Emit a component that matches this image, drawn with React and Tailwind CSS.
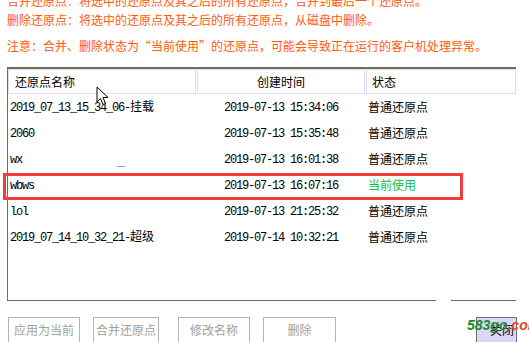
import React from "react";

const rows = [
  { name: "2019_07_13_15_34_06-", cjk: "挂载", time: "2019-07-13 15:34:06", state: "普通还原点" },
  { name: "2060", cjk: "", time: "2019-07-13 15:35:48", state: "普通还原点" },
  { name: "wx", cjk: "", time: "2019-07-13 16:01:38", state: "普通还原点" },
  { name: "wbws", cjk: "", time: "2019-07-13 16:07:16", state: "当前使用", current: true },
  { name: "lol", cjk: "", time: "2019-07-13 21:25:32", state: "普通还原点" },
  { name: "2019_07_14_10_32_21-", cjk: "超级", time: "2019-07-14 10:32:21", state: "普通还原点" },
];

const mono = "font-['Liberation_Mono',monospace] tracking-[-1.2px]";

function Btn({ children, className = "" }) {
  return (
    <div className={"h-[26px] border border-[#b4b4ac] text-[#a0a0a0] flex items-start justify-center pt-[3px] text-[12px] " + className}>
      {children}
    </div>
  );
}

export default function App() {
  return (
    <div className="relative w-[529px] h-[342px] overflow-hidden bg-white text-[12px] font-['Noto_Sans_CJK_SC',sans-serif]">
      {/* notes */}
      <div className="pl-[7px] text-[#ff5a0a] leading-[19px] -mt-[9px]">
        <div>合并还原点：将选中的还原点及其之后的所有还原点，合并到最后一个还原点。</div>
        <div>删除还原点：将选中的还原点及其之后的所有还原点，从磁盘中删除。</div>
        <div className="mt-[7px]">注意：合并、删除状态为“当前使用”的还原点，可能会导致正在运行的客户机处理异常。</div>
      </div>

      {/* list */}
      <div className="ml-[7px] mt-[12px] w-[509px] h-[234px] border-l border-t-2 border-b border-[#6e6e5c] relative">
        <div className="flex h-[25px] text-black">
          <div className="w-[188px] border border-[#dcdcf4] pl-[6px] flex items-center">还原点名称</div>
          <div className="w-[168px] ml-[1px] border border-[#dcdcf4] flex items-center justify-center">创建时间</div>
          <div className="flex-1 ml-[1px] border border-[#dcdcf4] pl-[5px] flex items-center">状态</div>
        </div>
        {rows.map((r) => (
          <div key={r.time} className="flex h-[26px] items-center text-black">
            <div className="w-[189px] pl-[2px]">
              <span className={mono}>{r.name}</span>
              {r.cjk}
            </div>
            <div className="w-[168px] pl-[27px]">
              <span className={mono}>{r.time}</span>
            </div>
            <div className={"flex-1 pl-[3px] " + (r.current ? "text-[#10c040]" : "")}>{r.state}</div>
          </div>
        ))}
        <div className="absolute left-[428px] -bottom-[1px] w-[15px] h-[1px] bg-white" />
      </div>

      {/* buttons */}
      <div className="flex mt-[16px] ml-[8px]">
        <Btn className="w-[72px]">应用为当前</Btn>
        <Btn className="w-[66px] ml-[13px]">合并还原点</Btn>
        <Btn className="w-[72px] ml-[19px]">修改名称</Btn>
        <Btn className="w-[73px] ml-[13px]">删除</Btn>
        <div className="w-[41px] ml-[140px] h-[26px] border border-[#707070] bg-[#d8d8f8] text-black pt-[3px] pl-[13px]">关闭</div>
      </div>

      {/* selection highlight */}
      <div className="absolute left-[3px] top-[173px] w-[460px] h-[27px] border-[3px] border-[#f23b3b]" />

      {/* stray pixel */}
      <div className="absolute left-[117px] top-[166px] w-[8px] h-[1px] bg-[#7f9fe8]" />

      {/* cursor */}
      <svg className="absolute left-[96px] top-[86px]" width="13" height="20" viewBox="0 0 13 20">
        <path d="M1 1 L1 16 L4.5 12.5 L7 18.5 L9.5 17.5 L7 11.5 L12 11.5 Z" fill="#fff" stroke="#000" strokeWidth="1" strokeLinejoin="miter" />
      </svg>

      {/* watermark */}
      <div className="absolute left-[467px] top-[318px] font-['Liberation_Sans',sans-serif] font-bold italic text-[14px] leading-none">
        <span className="text-[#1f8a2e]">583go</span>
        <span className="text-[#ee4422]">.com</span>
      </div>
    </div>
  );
}
